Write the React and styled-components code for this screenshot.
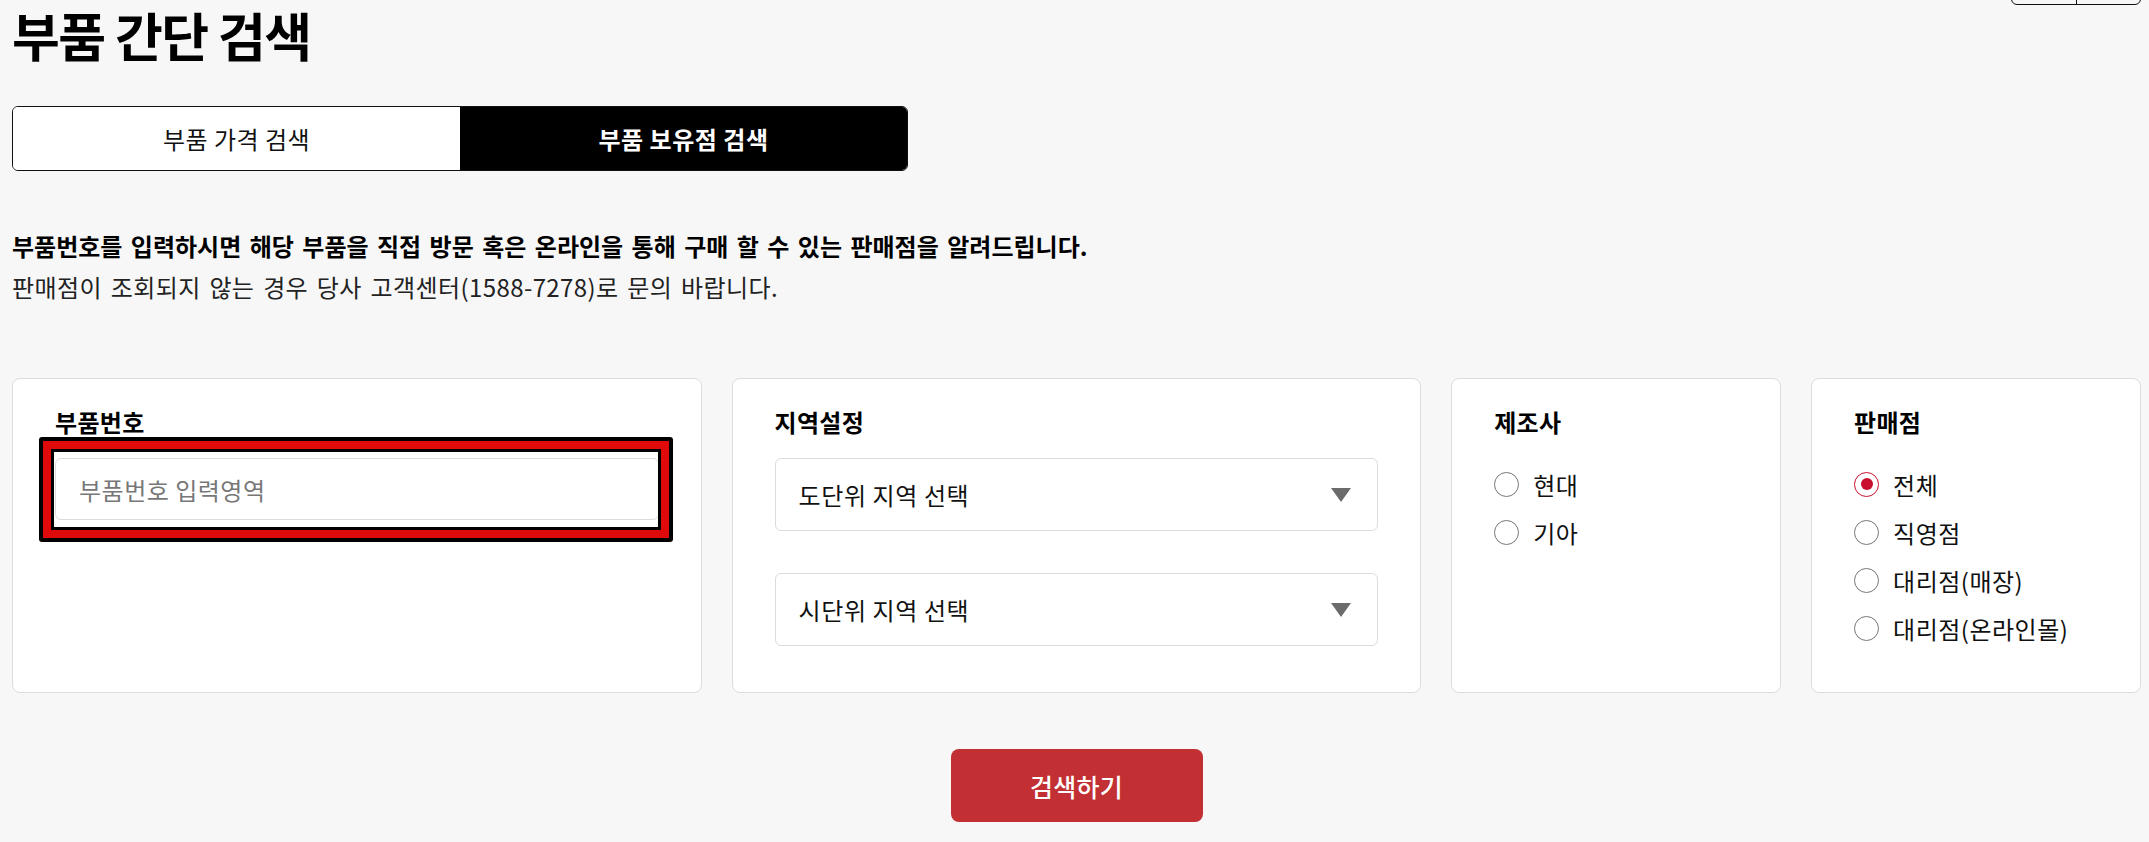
import React from "react";
import styled, { createGlobalStyle } from "styled-components";

const GlobalStyle = createGlobalStyle`
  html, body { margin: 0; padding: 0; background: #f7f7f7; }
  body { font-family: "Noto Sans CJK KR", "Noto Sans", sans-serif; color: #111; }
  * { box-sizing: border-box; }
`;

const Page = styled.div`
  padding: 0 8px 0 12px;
  overflow: hidden;
  height: 842px;
`;

const Header = styled.header`
  display: flex;
  justify-content: space-between;
  align-items: flex-start;
`;

const Title = styled.h1`
  margin: 0;
  padding-top: 2px;
  font-size: 52px;
  line-height: 66px;
  font-weight: 700;
  letter-spacing: -1.5px;
  color: #000;
`;

const Segment = styled.div`
  display: flex;
  margin-top: -36px;
  height: 41px;
  border: 1.5px solid #111;
  border-radius: 0 0 6px 6px;
`;

const SegmentItem = styled.div`
  width: 64px;
  & + & { border-left: 1.5px solid #111; }
`;

const Tabs = styled.div`
  display: grid;
  grid-template-columns: 1fr 1fr;
  width: 896px;
  height: 65px;
  margin-top: 38px;
  border: 1px solid #111;
  border-radius: 6px;
  overflow: hidden;
`;

const Tab = styled.button`
  border: 0;
  margin: 0;
  font-family: inherit;
  font-size: 24px;
  font-weight: ${(p) => (p.$active ? 700 : 400)};
  letter-spacing: ${(p) => (p.$active ? "0.5px" : "0.5px")};
  background: ${(p) => (p.$active ? "#000" : "#fff")};
  color: ${(p) => (p.$active ? "#fff" : "#111")};
  cursor: pointer;
`;

const Desc = styled.div`
  margin-top: 54px;
  font-size: 24px;
  line-height: 41px;
  word-spacing: 3px;
`;

const DescStrong = styled.p`
  margin: 0;
  font-weight: 700;
  color: #000;
`;

const DescNote = styled.p`
  margin: 0;
  color: #222;
  letter-spacing: 0.4px;
`;

const Cards = styled.div`
  display: grid;
  grid-template-columns: 2.09fr 2.09fr 1fr 1fr;
  gap: 30px;
  margin-top: 71px;
`;

const Card = styled.section`
  background: #fff;
  border: 1px solid #dcdcdc;
  border-radius: 8px;
  padding: 26px 42px 40px;
`;

const CardLabel = styled.h3`
  margin: 0 0 20px;
  font-size: 24px;
  line-height: 33px;
  font-weight: 700;
  letter-spacing: 0.3px;
  color: #000;
`;

const InputWrap = styled.div`
  position: relative;
`;

const TextInput = styled.input`
  display: block;
  width: 100%;
  height: 62px;
  border: 1px solid #dcdcdc;
  border-radius: 6px;
  padding: 0 23px;
  font-family: inherit;
  font-size: 24px;
  letter-spacing: 0.5px;
  color: #111;
  background: #fff;
  outline: none;
  &::placeholder { color: #777; }
`;

const Highlight = styled.div`
  position: absolute;
  top: -21px;
  bottom: -22px;
  left: -16px;
  right: -14px;
  border: 4px solid #000;
  border-radius: 3px;
  box-shadow: inset 0 0 0 8px #e00a0a, inset 0 0 0 11px #000;
  pointer-events: none;
`;

const SelectStack = styled.div`
  display: flex;
  flex-direction: column;
  gap: 42px;
`;

const Select = styled.div`
  display: flex;
  align-items: center;
  justify-content: space-between;
  height: 73px;
  padding: 0 26px 0 23px;
  border: 1px solid #dcdcdc;
  border-radius: 6px;
  font-size: 24px;
  letter-spacing: 0.6px;
  color: #111;
  background: #fff;
`;

const RadioList = styled.div`
  display: flex;
  flex-direction: column;
  margin-top: 22px;
`;

const RadioRow = styled.label`
  display: flex;
  align-items: center;
  gap: 14px;
  height: 48px;
  font-size: 24px;
  letter-spacing: 0.5px;
  color: #111;
`;

const RadioCircle = styled.span`
  width: 25px;
  height: 25px;
  border-radius: 50%;
  border: 1px solid ${(p) => (p.$checked ? "#c8102e" : "#777")};
  display: flex;
  align-items: center;
  justify-content: center;
  flex-shrink: 0;
  background: #fff;
  &::after {
    content: "";
    width: 12px;
    height: 12px;
    border-radius: 50%;
    background: ${(p) => (p.$checked ? "#c8102e" : "transparent")};
  }
`;

const Actions = styled.div`
  display: flex;
  justify-content: center;
  margin-top: 56px;
`;

const SearchButton = styled.button`
  width: 252px;
  height: 73px;
  border: 0;
  border-radius: 8px;
  background: #c23033;
  color: #fff;
  font-family: inherit;
  font-size: 25px;
  font-weight: 500;
  letter-spacing: 0.3px;
  cursor: pointer;
`;

const Arrow = () => (
  <svg width="20" height="14" viewBox="0 0 20 14">
    <polygon points="0,0 20,0 10,14" fill="#6b6b6b" />
  </svg>
);

const Radio = ({ label, checked }) => (
  <RadioRow>
    <RadioCircle $checked={checked} />
    {label}
  </RadioRow>
);

export default function App() {
  return (
    <>
      <GlobalStyle />
      <Page>
        <Header>
          <Title>부품 간단 검색</Title>
          <Segment>
            <SegmentItem />
            <SegmentItem />
          </Segment>
        </Header>
        <Tabs>
          <Tab>부품 가격 검색</Tab>
          <Tab $active>부품 보유점 검색</Tab>
        </Tabs>
        <Desc>
          <DescStrong>
            부품번호를 입력하시면 해당 부품을 직접 방문 혹은 온라인을 통해 구매 할 수 있는 판매점을 알려드립니다.
          </DescStrong>
          <DescNote>판매점이 조회되지 않는 경우 당사 고객센터(1588-7278)로 문의 바랍니다.</DescNote>
        </Desc>
        <Cards>
          <Card>
            <CardLabel>부품번호</CardLabel>
            <InputWrap>
              <TextInput placeholder="부품번호 입력영역" />
              <Highlight />
            </InputWrap>
          </Card>
          <Card>
            <CardLabel>지역설정</CardLabel>
            <SelectStack>
              <Select>
                도단위 지역 선택
                <Arrow />
              </Select>
              <Select>
                시단위 지역 선택
                <Arrow />
              </Select>
            </SelectStack>
          </Card>
          <Card>
            <CardLabel>제조사</CardLabel>
            <RadioList>
              <Radio label="현대" />
              <Radio label="기아" />
            </RadioList>
          </Card>
          <Card>
            <CardLabel>판매점</CardLabel>
            <RadioList>
              <Radio label="전체" checked />
              <Radio label="직영점" />
              <Radio label="대리점(매장)" />
              <Radio label="대리점(온라인몰)" />
            </RadioList>
          </Card>
        </Cards>
        <Actions>
          <SearchButton>검색하기</SearchButton>
        </Actions>
      </Page>
    </>
  );
}
